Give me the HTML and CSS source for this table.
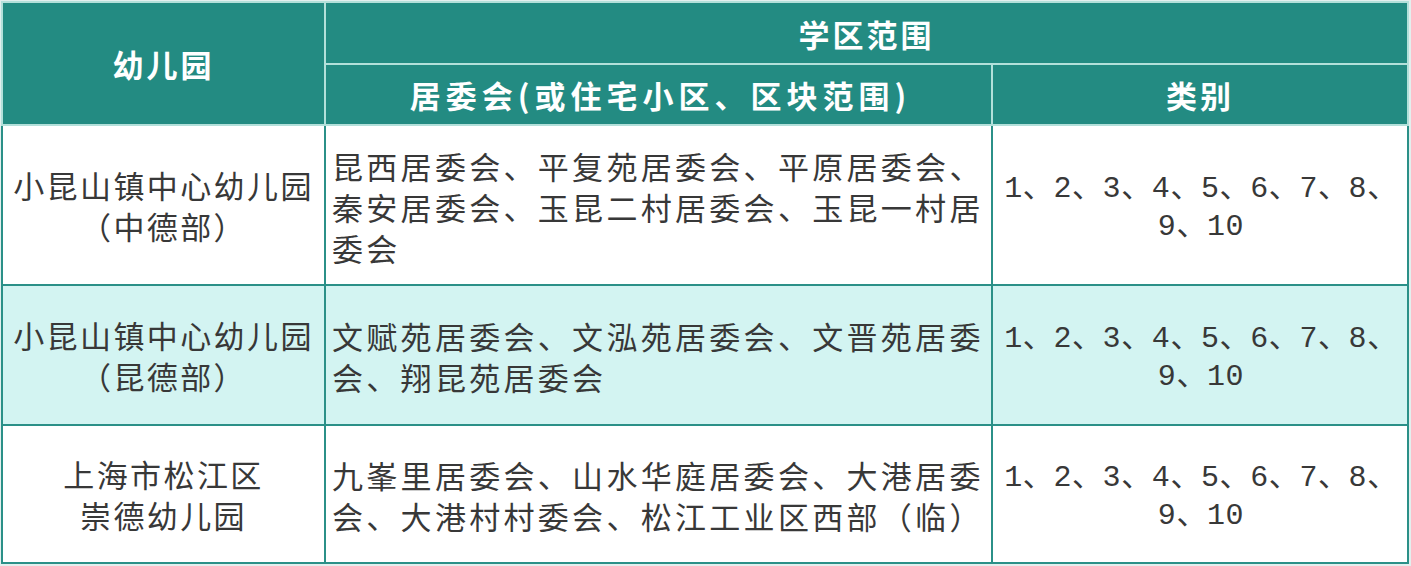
FILE: index.html
```html
<!DOCTYPE html>
<html lang="zh-CN">
<head>
<meta charset="utf-8">
<title>学区范围</title>
<link rel="stylesheet" href="styles.css">
</head>
<body>
<div class="wrap">
<table class="zone">
  <colgroup>
    <col class="c-school">
    <col class="c-area">
    <col class="c-type">
  </colgroup>
  <thead>
    <tr class="h1">
      <th rowspan="2" class="th-school">幼儿园</th>
      <th colspan="2">学区范围</th>
    </tr>
    <tr class="h2">
      <th class="th-area">居委会(或住宅小区、区块范围)</th>
      <th>类别</th>
    </tr>
  </thead>
  <tbody>
    <tr class="r1">
      <td class="school">小昆山镇中心幼儿园<br>（中德部）</td>
      <td class="area">昆西居委会、平复苑居委会、平原居委会、秦安居委会、玉昆二村居委会、玉昆一村居委会</td>
      <td class="type">1、2、3、4、5、6、7、8、9、10</td>
    </tr>
    <tr class="r2 alt">
      <td class="school">小昆山镇中心幼儿园<br>（昆德部）</td>
      <td class="area">文赋苑居委会、文泓苑居委会、文晋苑居委会、翔昆苑居委会</td>
      <td class="type">1、2、3、4、5、6、7、8、9、10</td>
    </tr>
    <tr class="r3">
      <td class="school">上海市松江区<br>崇德幼儿园</td>
      <td class="area">九峯里居委会、山水华庭居委会、大港居委会、大港村村委会、松江工业区西部（临）</td>
      <td class="type">1、2、3、4、5、6、7、8、9、10</td>
    </tr>
  </tbody>
</table>
</div>
</body>
</html>
```
FILE: styles.css
```css
html, body {
  margin: 0;
  padding: 0;
}
body {
  background: #e3efee;
  font-family: "Noto Sans CJK SC", "Noto Sans", sans-serif;
  color: #383838;
}
.wrap {
  padding: 1px 2px 0 1px;
}
.zone {
  border-collapse: collapse;
  table-layout: fixed;
  width: 1408px;
  background: #ffffff;
}
.c-school { width: 323px; }
.c-area { width: 667px; }
.c-type { width: 416px; }

.zone th {
  background: #238b82;
  color: #ffffff;
  font-weight: 700;
  font-size: 31px;
  letter-spacing: 3px;
  border: 2px solid #b3e0da;
  padding: 0;
  text-align: center;
  vertical-align: middle;
}
.h1 { height: 62px; }
.h2 { height: 61px; }
.zone .th-area { letter-spacing: 5px; padding-left: 4px; }

.zone td {
  border: 2px solid #2b9088;
  font-size: 31px;
  line-height: 41px;
  vertical-align: middle;
  padding: 0;
}
.r1 { height: 160px; }
.r2 { height: 140px; }
.r3 { height: 138px; }
.alt td { background: #d3f4f2; }

.school {
  text-align: center;
  letter-spacing: 2.4px;
}
.area {
  text-align: left;
  letter-spacing: 3.3px;
  padding: 2px 4px 0 6px !important;
}
.type {
  text-align: center;
  font-family: "Liberation Mono", "Noto Sans CJK SC", monospace;
  font-size: 30px !important;
  line-height: 38px !important;
  letter-spacing: 0.6px;
  padding: 6px 4px 0 6px !important;
}
```
